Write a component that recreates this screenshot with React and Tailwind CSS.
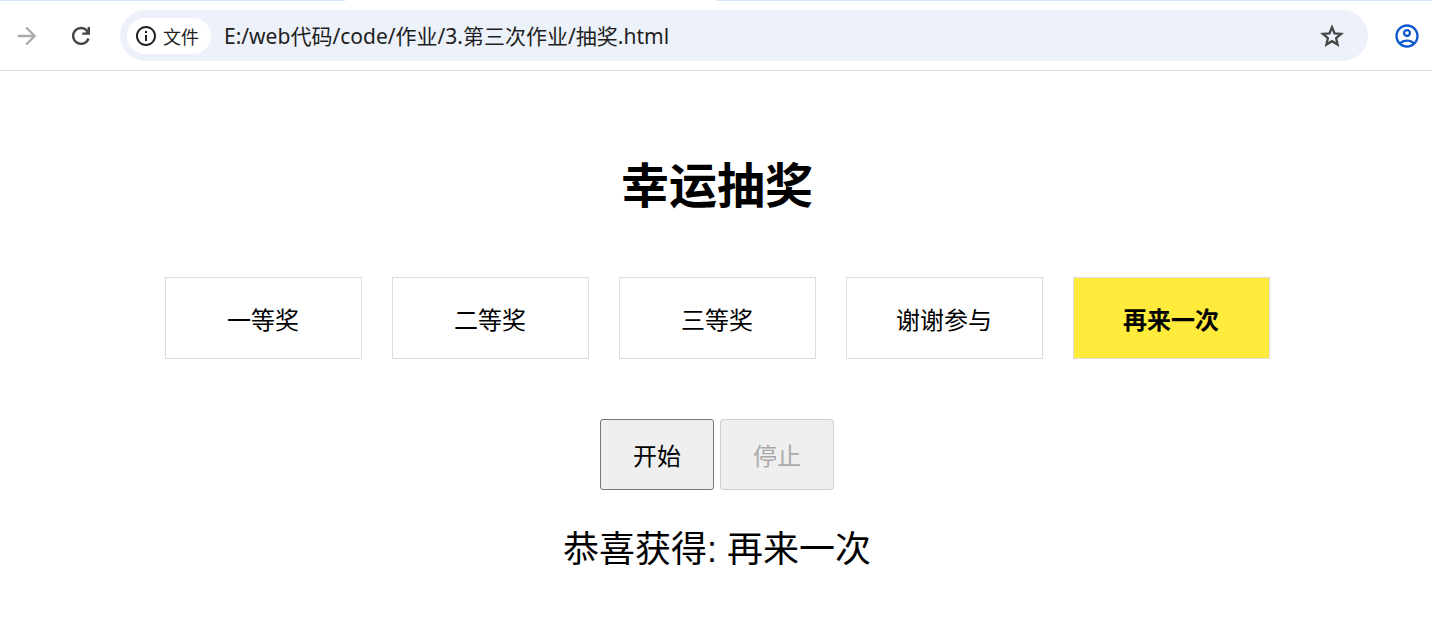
import { useEffect, useRef, useState } from "react";
import {
  MdArrowForward,
  MdInfoOutline,
  MdOutlineAccountCircle,
} from "react-icons/md";

const PRIZES = ["一等奖", "二等奖", "三等奖", "谢谢参与", "再来一次"];

export default function App() {
  return (
    <div className="min-h-screen bg-white text-black font-['Noto_Sans_CJK_SC',sans-serif]">
      <Toolbar />
      <Lottery />
    </div>
  );
}

function Toolbar() {
  return (
    <header>
      <div className="flex h-px">
        <div className="basis-[345px] bg-[#d3e3fd]" />
        <div className="basis-[372px]" />
        <div className="grow bg-[#d3e3fd]" />
      </div>
      <div className="flex items-center pl-[13px] pr-[11px] py-[9px] border-b border-[#dfe1e5]">
        <button aria-label="前进" className="text-[#ababab]" disabled>
          <MdArrowForward size={28} />
        </button>
        <button aria-label="重新加载" className="ml-[26px] text-[#474747]">
          <ReloadIcon />
        </button>
        <div className="grow ml-[25px] h-[51px] flex items-center pl-[7px] pr-[22px] rounded-full bg-[#ecf1fa]">
          <button className="h-9 flex items-center gap-[5px] px-[7px] rounded-full bg-white text-[#1f1f1f]">
            <MdInfoOutline size={24} />
            <span className="text-lg leading-6 pr-[5px]">文件</span>
          </button>
          <input
            aria-label="地址"
            className="grow min-w-0 ml-[13px] bg-transparent outline-none text-[21px] leading-8 text-[#1f1f1f] font-['Noto_Sans','Noto_Sans_CJK_SC',sans-serif]"
            defaultValue="E:/web代码/code/作业/3.第三次作业/抽奖.html"
          />
          <button aria-label="收藏" className="text-[#474747]">
            <StarIcon />
          </button>
        </div>
        <button aria-label="个人资料" className="ml-[25px] text-[#0b57d0]">
          <MdOutlineAccountCircle size={28} />
        </button>
      </div>
    </header>
  );
}

function ReloadIcon() {
  return (
    <svg width="28" height="28" viewBox="0 0 28 28" fill="none" aria-hidden="true">
      <path
        d="M20.6 9.5A7.9 7.9 0 1 0 21.5 16.5"
        stroke="currentColor"
        strokeWidth="2.4"
      />
      <path d="M20.6 5H23v7.8h-7.8v-2.4h3.4l2-2z" fill="currentColor" />
    </svg>
  );
}

function StarIcon() {
  return (
    <svg width="28" height="28" viewBox="0 0 28 28" fill="none" aria-hidden="true">
      <path
        d="M14 5.3l2.5 6 6.6.6-5 4.3 1.5 6.4-5.6-3.4-5.6 3.4 1.5-6.4-5-4.3 6.6-.6z"
        stroke="currentColor"
        strokeWidth="2.3"
      />
    </svg>
  );
}

function Lottery() {
  const [active, setActive] = useState(4);
  const [running, setRunning] = useState(false);
  const timer = useRef(null);

  const handleStart = () => {
    setRunning(true);
    timer.current = setInterval(() => {
      setActive(Math.floor(Math.random() * PRIZES.length));
    }, 100);
  };

  const handleStop = () => {
    clearInterval(timer.current);
    setRunning(false);
  };

  useEffect(() => {
    return () => clearInterval(timer.current);
  }, []);

  return (
    <main className="flex flex-col items-center pl-[2px] pt-19 text-center">
      <h1 className="text-5xl leading-[70px] font-bold">幸运抽奖</h1>

      <div className="w-full max-w-[1105px] mt-15 grid grid-cols-5 gap-[30px]">
        {PRIZES.map((prize, i) => (
          <div
            key={prize}
            className={`pt-[23px] pb-[21px] border border-[#dddddd] text-2xl leading-9 ${
              i === active ? "bg-[#ffeb3b] font-bold" : ""
            }`}
          >
            {prize}
          </div>
        ))}
      </div>

      <div className="mt-15 flex gap-[6px]">
        <DrawButton onClick={handleStart} disabled={running}>
          开始
        </DrawButton>
        <DrawButton onClick={handleStop} disabled={!running}>
          停止
        </DrawButton>
      </div>

      <p className="mt-8 text-4xl leading-14 font-['Liberation_Sans','Noto_Sans_CJK_SC',sans-serif]">
        {running ? "抽奖中..." : `恭喜获得: ${PRIZES[active]}`}
      </p>
    </main>
  );
}

function DrawButton({ children, ...props }) {
  return (
    <button
      className="px-8 py-[17px] rounded-[3px] border border-[#767676] bg-[#efefef] text-2xl leading-[35px] disabled:border-[#d0d0d0] disabled:text-[#aaaaaa]"
      {...props}
    >
      {children}
    </button>
  );
}
